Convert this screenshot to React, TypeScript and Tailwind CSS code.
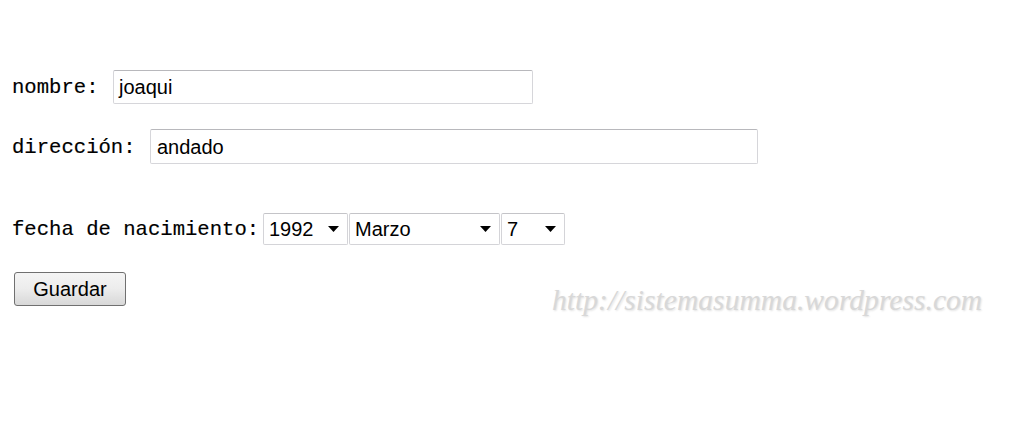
import React from "react";

function Caret() {
  return (
    <svg width="11" height="6" viewBox="0 0 11 6" className="shrink-0">
      <path d="M0 0 L11 0 L5.5 6 Z" fill="#000" />
    </svg>
  );
}

function Select({ value, width }: { value: string; width: string }) {
  return (
    <div
      className={`${width} h-[32px] flex items-center justify-between pl-[5px] pr-[8px] bg-white border border-[#d4d4d8] border-t-[#c4c4c8] rounded-[2px] text-[20px] text-black font-['Liberation_Sans',Arial,sans-serif]`}
    >
      <span>{value}</span>
      <Caret />
    </div>
  );
}

const label =
  "text-[20.6px] text-black pt-[3px] whitespace-nowrap font-['Liberation_Mono','Courier_New',monospace] [-webkit-text-stroke:0.15px_#000]";
const field =
  "flex items-center border border-[#d6d6da] border-t-[#b8b8bc] rounded-[2px] text-[20px] text-black font-['Liberation_Sans',Arial,sans-serif]";

export default function App() {
  return (
    <div className="relative w-[1009px] h-[437px] bg-white overflow-hidden">
      <div className="pl-[12px] pt-[70px] flex flex-col items-start">
        <div className="flex items-center h-[34px]">
          <span className={`w-[101px] ${label}`}>nombre:</span>
          <div className={`w-[420px] h-[34px] pl-[5px] ${field}`}>joaqui</div>
        </div>
        <div className="flex items-center h-[35px] mt-[25px]">
          <span className={`w-[138px] ${label}`}>dirección:</span>
          <div className={`w-[608px] h-[35px] pl-[6px] ${field}`}>andado</div>
        </div>
        <div className="flex items-center h-[32px] mt-[49px]">
          <span className={`w-[251px] ${label}`}>fecha de nacimiento:</span>
          <div className="flex gap-[1px]">
            <Select value="1992" width="w-[85px]" />
            <Select value="Marzo" width="w-[151px]" />
            <Select value="7" width="w-[64px]" />
          </div>
        </div>
        <button className="mt-[27px] ml-[2px] w-[112px] h-[34px] flex items-center justify-center border border-[#707070] rounded-[3px] bg-gradient-to-b from-[#f4f4f4] via-[#ececec] to-[#d8d8d8] text-[20px] text-black font-['Liberation_Sans',Arial,sans-serif]">
          Guardar
        </button>
      </div>
      <div className="absolute left-[552px] top-[278px] text-[29.6px] italic text-[#d8d8d8] whitespace-nowrap font-['Liberation_Serif','Times_New_Roman',serif] [text-shadow:1px_1px_2px_rgba(0,0,0,0.12)]">
        http://sistemasumma.wordpress.com
      </div>
    </div>
  );
}
